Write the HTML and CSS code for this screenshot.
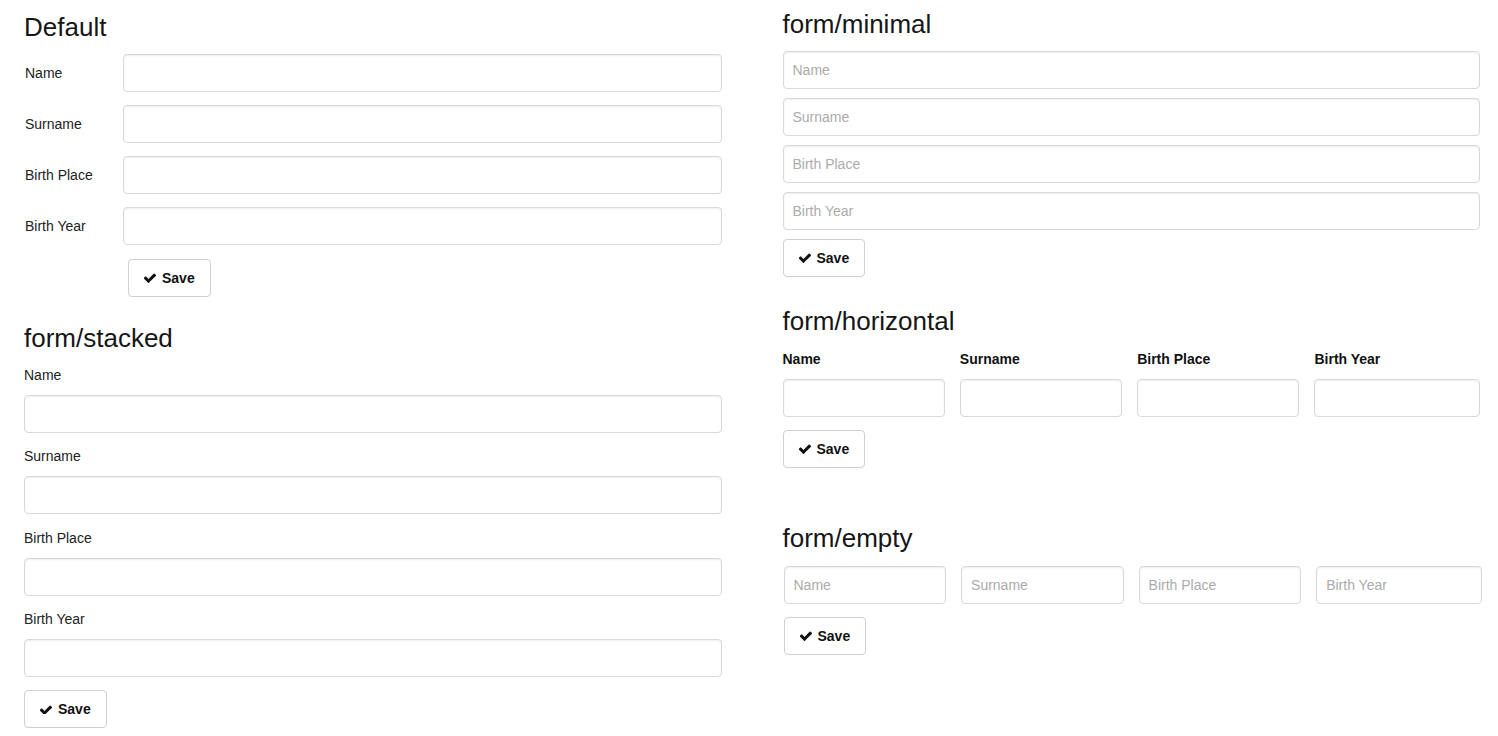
FILE: index.html
```html
<!DOCTYPE html>
<html lang="en">
<head>
<meta charset="utf-8">
<title>Forms</title>
<link rel="stylesheet" href="styles.css">
</head>
<body>
<div class="page">
  <div class="col col-left">
    <section class="form form-default">
      <h2 class="title">Default</h2>
      <div class="rows">
        <div class="row"><label class="row-label">Name</label><input class="field" type="text"></div>
        <div class="row"><label class="row-label">Surname</label><input class="field" type="text"></div>
        <div class="row"><label class="row-label">Birth Place</label><input class="field" type="text"></div>
        <div class="row"><label class="row-label">Birth Year</label><input class="field" type="text"></div>
      </div>
      <button class="btn btn-default" type="button"><svg class="check" viewBox="149 266 1522 1188"><path d="M1671 566q0 40-28 68l-724 724-136 136q-28 28-68 28t-68-28l-136-136-362-362q-28-28-28-68t28-68l136-136q28-28 68-28t68 28l294 295 656-657q28-28 68-28t68 28l136 136q28 28 28 68z"/></svg><span>Save</span></button>
    </section>

    <section class="form form-stacked">
      <h2 class="title">form/stacked</h2>
      <div class="group"><label class="stack-label">Name</label><input class="field" type="text"></div>
      <div class="group"><label class="stack-label">Surname</label><input class="field" type="text"></div>
      <div class="group"><label class="stack-label">Birth Place</label><input class="field" type="text"></div>
      <div class="group"><label class="stack-label">Birth Year</label><input class="field" type="text"></div>
      <button class="btn" type="button"><svg class="check" viewBox="149 266 1522 1188"><path d="M1671 566q0 40-28 68l-724 724-136 136q-28 28-68 28t-68-28l-136-136-362-362q-28-28-28-68t28-68l136-136q28-28 68-28t68 28l294 295 656-657q28-28 68-28t68 28l136 136q28 28 28 68z"/></svg><span>Save</span></button>
    </section>
  </div>

  <div class="col col-right">
    <section class="form form-minimal">
      <h2 class="title">form/minimal</h2>
      <div class="min-list">
        <input class="field" type="text" placeholder="Name">
        <input class="field" type="text" placeholder="Surname">
        <input class="field" type="text" placeholder="Birth Place">
        <input class="field" type="text" placeholder="Birth Year">
      </div>
      <button class="btn btn-minimal" type="button"><svg class="check" viewBox="149 266 1522 1188"><path d="M1671 566q0 40-28 68l-724 724-136 136q-28 28-68 28t-68-28l-136-136-362-362q-28-28-28-68t28-68l136-136q28-28 68-28t68 28l294 295 656-657q28-28 68-28t68 28l136 136q28 28 28 68z"/></svg><span>Save</span></button>
    </section>

    <section class="form form-horizontal">
      <h2 class="title">form/horizontal</h2>
      <div class="hgrid">
        <div class="hcell"><label class="h-label">Name</label><input class="field" type="text"></div>
        <div class="hcell"><label class="h-label">Surname</label><input class="field" type="text"></div>
        <div class="hcell"><label class="h-label">Birth Place</label><input class="field" type="text"></div>
        <div class="hcell"><label class="h-label">Birth Year</label><input class="field" type="text"></div>
      </div>
      <button class="btn" type="button"><svg class="check" viewBox="149 266 1522 1188"><path d="M1671 566q0 40-28 68l-724 724-136 136q-28 28-68 28t-68-28l-136-136-362-362q-28-28-28-68t28-68l136-136q28-28 68-28t68 28l294 295 656-657q28-28 68-28t68 28l136 136q28 28 28 68z"/></svg><span>Save</span></button>
    </section>

    <section class="form form-empty">
      <h2 class="title">form/empty</h2>
      <div class="hgrid hgrid-empty">
        <input class="field" type="text" placeholder="Name">
        <input class="field" type="text" placeholder="Surname">
        <input class="field" type="text" placeholder="Birth Place">
        <input class="field" type="text" placeholder="Birth Year">
      </div>
      <button class="btn btn-empty" type="button"><svg class="check" viewBox="149 266 1522 1188"><path d="M1671 566q0 40-28 68l-724 724-136 136q-28 28-68 28t-68-28l-136-136-362-362q-28-28-28-68t28-68l136-136q28-28 68-28t68 28l294 295 656-657q28-28 68-28t68 28l136 136q28 28 28 68z"/></svg><span>Save</span></button>
    </section>
  </div>
</div>
</body>
</html>
```

FILE: styles.css
```css
* {
  box-sizing: border-box;
}

html, body {
  margin: 0;
  padding: 0;
  background: #ffffff;
}

body {
  font-family: "Liberation Sans", Arial, Helvetica, sans-serif;
  font-size: 14px;
  line-height: 20px;
  color: #222222;
}

.page {
  display: grid;
  grid-template-columns: 1fr 1fr;
  column-gap: 61px;
  padding: 0 18px 0 24px;
}

.col-left {
  padding-top: 12px;
}

.col-right {
  padding-top: 9px;
}

.form {
  display: flex;
  flex-direction: column;
  align-items: flex-start;
}

.title {
  margin: 0 0 12px 0;
  font-size: 26px;
  line-height: 30px;
  font-weight: normal;
  color: #161616;
}

.field {
  display: block;
  width: 100%;
  height: 38px;
  margin: 0;
  padding: 0 9px;
  border: 1px solid #d9d9d9;
  border-radius: 4px;
  background: #ffffff;
  box-shadow: inset 0 1px 2px rgba(0, 0, 0, 0.07);
  font-family: inherit;
  font-size: 14px;
  color: #222222;
  outline: none;
}

.field::placeholder {
  color: #ababab;
}

.btn {
  display: inline-flex;
  align-items: center;
  gap: 6px;
  height: 38px;
  padding: 0 15px;
  border: 1px solid #cfcfcf;
  border-radius: 4px;
  background: #ffffff;
  font-family: inherit;
  font-size: 14px;
  font-weight: bold;
  color: #111111;
  cursor: pointer;
}

.check {
  width: 12px;
  height: 9.4px;
  fill: #111111;
  flex: none;
}

/* Default */
.rows {
  display: flex;
  flex-direction: column;
  gap: 13px;
  width: 100%;
}

.row {
  display: grid;
  grid-template-columns: 99px 1fr;
  align-items: center;
}

.row-label {
  padding-left: 1px;
  color: #222222;
}

.btn-default {
  margin: 14px 0 0 104px;
}

/* Stacked */
.form-stacked {
  margin-top: 26px;
}

.group {
  width: 100%;
  margin-bottom: 13.33px;
}

.stack-label {
  display: block;
  margin-bottom: 10px;
}

/* Minimal */
.min-list {
  display: flex;
  flex-direction: column;
  gap: 9px;
  width: 100%;
}

.btn-minimal {
  margin-top: 9px;
}

/* Horizontal */
.form-horizontal {
  margin-top: 29px;
}

.form-horizontal .title {
  margin-bottom: 13px;
}

.hgrid {
  display: grid;
  grid-template-columns: 1fr 1fr 1fr 1.02fr;
  column-gap: 15px;
  width: 100%;
  margin-bottom: 13px;
}

.h-label {
  display: block;
  margin-bottom: 10px;
  font-weight: bold;
  color: #111111;
}

/* Empty */
.form-empty {
  margin-top: 55px;
}

.form-empty .title {
  margin-bottom: 13px;
}

.hgrid-empty {
  width: calc(100% + 1px);
  margin-left: 1px;
}

.btn-empty {
  margin-left: 1px;
}
```
